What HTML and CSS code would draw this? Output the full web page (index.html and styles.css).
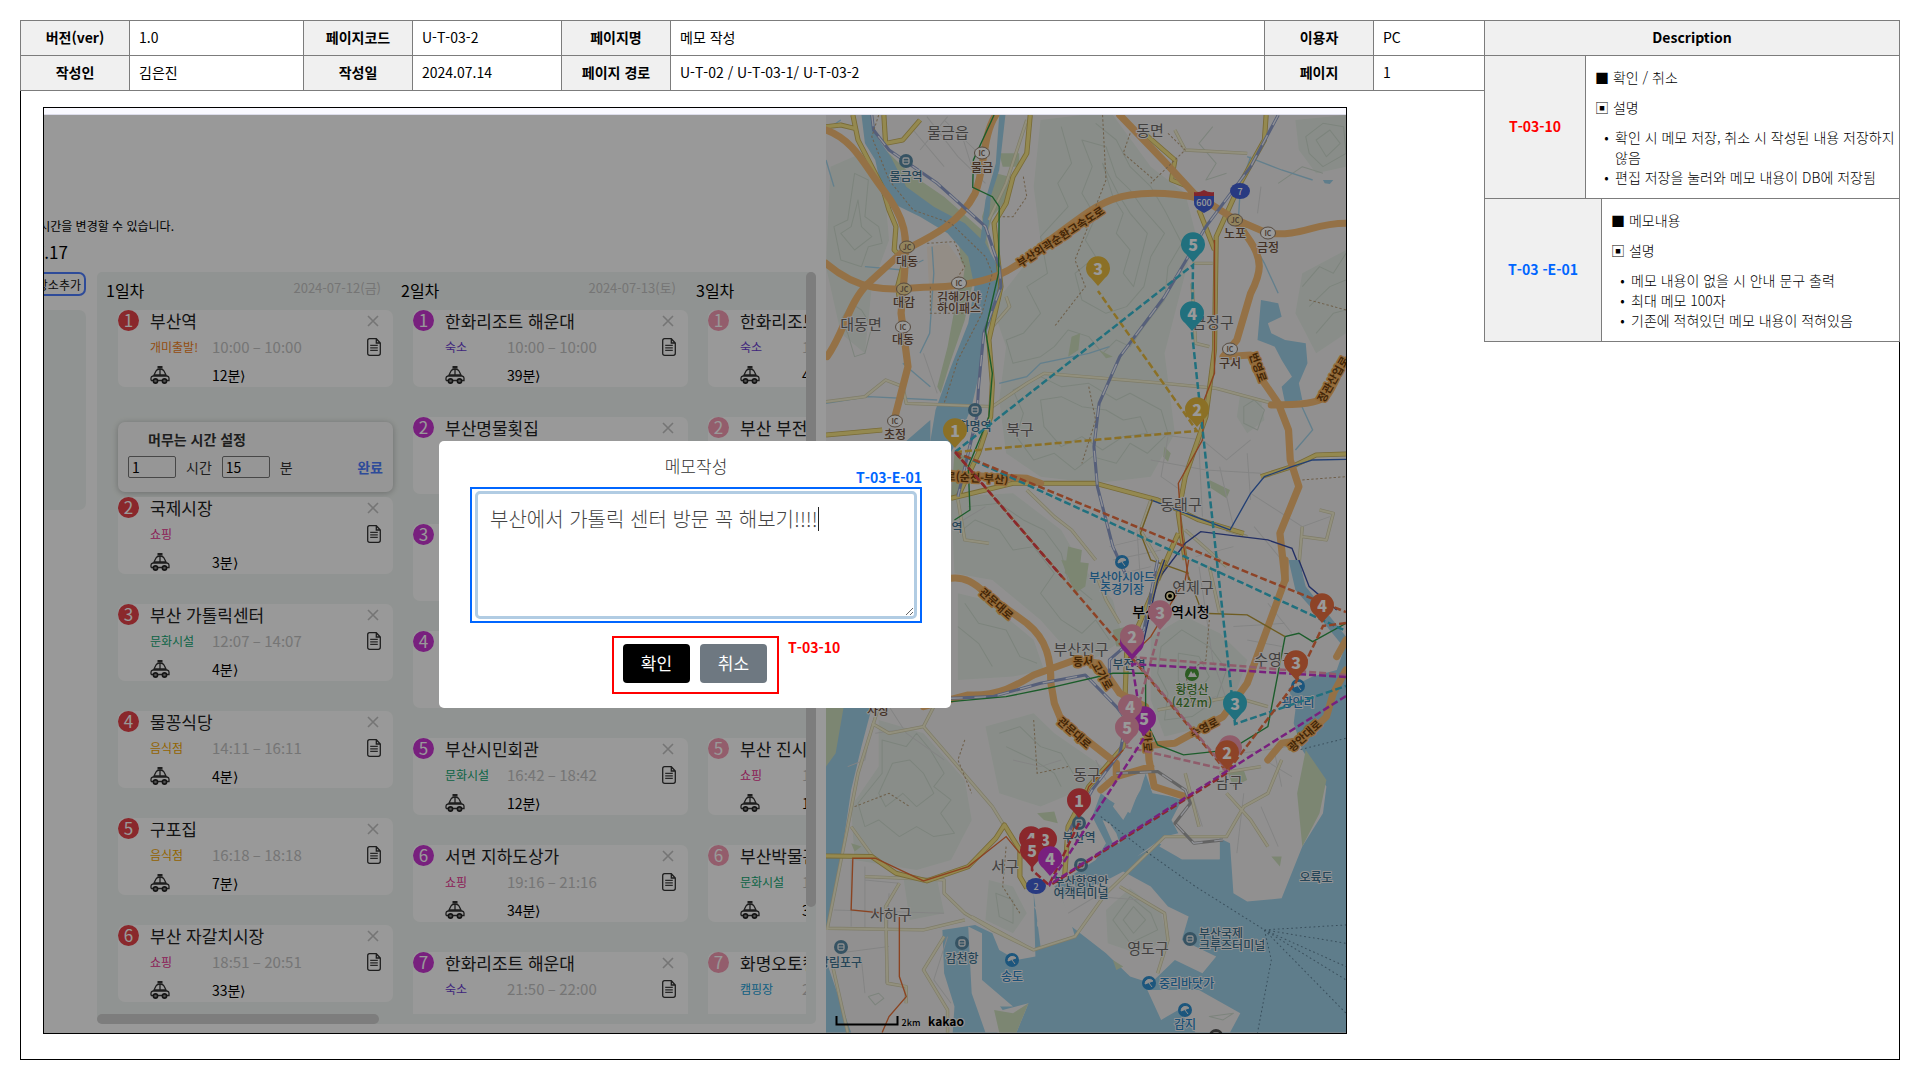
FILE: index.html
```html
<!DOCTYPE html>
<html lang="ko">
<head>
<meta charset="utf-8">
<title>U-T-03-2 메모 작성</title>
<link rel="stylesheet" href="styles.css">
</head>
<body>
<svg class="symbols" aria-hidden="true">
  <symbol id="i-close" viewBox="0 0 12 12"><path d="M1 1L11 11M11 1L1 11" fill="none" stroke="#c4c4c4" stroke-width="1.600"/></symbol>
  <symbol id="i-doc" viewBox="0 0 14 18"><path d="M2.5 .7H9.3L13.3 5V15.3Q13.3 17.3 11.3 17.3H2.7Q.7 17.3 .7 15.3V2.7Q.7 .7 2.5 .7ZM9.3 .7V5H13.3" fill="none" stroke="#333" stroke-width="1.3"/><path d="M3.2 7.3H10.8M3.2 9.8H10.8M3.2 12.3H10.8" stroke="#444" stroke-width="1.2"/></symbol>
  <symbol id="i-car" viewBox="0 0 20 18"><path d="M7.500 0H12.500V2.500H7.500Z" fill="#333"/><path d="M10 2.5V10M3.5 10L6 5Q7 3 10 3T14 5L16.500 10M1 14.500V12Q1 10.500 3 10H17Q19 10.500 19 12V14.500H16M4 14.500H1M8 14.500H12M4.500 9H15.500" fill="none" stroke="#333" stroke-width="1.300"/><circle cx="5.500" cy="15" r="2.100" fill="#888" stroke="#222" stroke-width="1.600"/><circle cx="14.500" cy="15" r="2.100" fill="#888" stroke="#222" stroke-width="1.600"/></symbol>
</svg>

<div class="sheet">
  <section class="main">
    <table class="info">
      <colgroup><col class="w-th"><col class="w-a"><col class="w-th"><col class="w-b"><col class="w-th"><col><col class="w-th"><col class="w-c"></colgroup>
      <tr><th scope="row">버전(ver)</th><td>1.0</td><th scope="row">페이지코드</th><td>U-T-03-2</td><th scope="row">페이지명</th><td>메모 작성</td><th scope="row">이용자</th><td>PC</td></tr>
      <tr><th scope="row">작성인</th><td>김은진</td><th scope="row">작성일</th><td>2024.07.14</td><th scope="row">페이지 경로</th><td>U-T-02 / U-T-03-1/ U-T-03-2</td><th scope="row">페이지</th><td>1</td></tr>
    </table>

    <div class="shot">
      <div class="topbar"></div>
      <div class="app">
        <div class="plan">
          <aside class="side">
            <p class="hint"><span>시간을 변경할 수 있습니다.</span></p>
            <p class="period"><span>7.17</span></p>
            <button class="add" type="button">장소추가</button>
            <div class="bin"></div>
          </aside>
          <div class="board">
            <div class="days" id="days"></div>
            <div class="vbar"></div>
            <div class="hbar"></div>
          </div>
        </div>
        <div class="map">
          <svg id="map" viewBox="0 0 520 918" preserveAspectRatio="xMidYMid slice">
            <rect width="520" height="918" fill="#f2f1f0"/>
            <g transform="scale(.3444 .3333) translate(-17 -45)">
              <g class="hill">
                <path d="M640 60L760 45L850 45L960 200L1060 280L1090 400L1050 560L1000 760L1030 1000L960 1130L800 1150L640 1130L540 1060L520 900L540 740L500 620L590 500L640 420L620 260Z"/>
                <path d="M30 200L120 160L190 300L200 420L150 560L130 760L60 700L17 500Z"/>
                <path d="M1220 880L1280 900L1290 960L1240 1000L1210 950Z"/>
                <path d="M1380 60L1527 45L1527 200L1440 220L1390 150ZM1400 520L1527 450L1527 700L1440 760L1380 640Z"/>
                <path d="M380 1190L560 1180L700 1290L760 1400L850 1500L880 1620L760 1700L640 1560L500 1440L390 1420Z"/>
              </g>
              <g class="contour">
                <path d="M700 80L730 190L690 250L720 320L640 410L660 520L600 560L640 640L590 700L540 720L560 790L640 770L680 740L720 690L780 710L820 760L860 720L900 740L940 680L1000 600L1010 500L1050 430L1000 330L960 260L900 200L860 120L800 70"/>
                <path d="M760 120L790 200L760 280L800 350L770 420L800 470L740 520L760 600L830 640L890 620L940 560L960 470L1000 400L940 330L900 270L860 230L830 140Z"/>
                <path d="M820 190L850 290L880 340L860 400L900 450L880 520L910 560L930 480L950 400L900 340L870 290Z"/>
                <path d="M560 870L640 830L700 860L780 850L860 900L900 880L990 930L1010 1000L950 1060L900 1030L860 1090L790 1070L740 1110L680 1060L620 1080L570 1010L590 940Z"/>
                <path d="M640 900L700 890L760 920L830 930L880 960L930 950L950 1000L880 1010L820 1050L760 1010L700 1040L650 980Z"/>
                <path d="M40 380L80 360L100 220L140 240L130 350L170 380L180 430L140 440L120 500L60 480Z"/>
                <path d="M80 700L60 660L90 610L120 630L150 680L130 760L100 770Z"/>
                <path d="M60 400L90 380L110 300L120 380L150 410L100 450Z"/>
                <path d="M1410 110L1460 70L1520 80L1527 160L1460 200L1420 160ZM1440 120L1480 90L1510 130L1470 170Z"/>
                <path d="M1400 560L1450 500L1490 520L1527 460M1420 620L1480 560L1527 540M1440 700L1490 640L1527 630"/>
                <path d="M400 1300L450 1260L520 1290L560 1350L620 1340L680 1420L640 1480L700 1560L760 1600L800 1560L840 1620"/>
                <path d="M430 1220L520 1210L590 1260L650 1290L700 1360L720 1440L790 1500"/>
                <path d="M1140 80L1100 130L1150 190L1120 240L1180 220M1330 250L1400 200L1460 220"/>
                <path d="M1230 920L1260 900L1290 930L1270 990L1230 970Z"/>
              </g>
              <g class="park">
                <path d="M190 150L260 220L360 290L480 400L500 480L400 370L280 310L235 250Z"/>
                <path d="M520 160L578 160L578 200L530 200ZM510 220L550 230L540 300L500 350L480 420L470 350Z"/>
                <path d="M400 400L440 470L445 540L420 660L380 780L350 880L340 860L370 740L395 600L410 500Z"/>
                <path d="M730 710L755 700L750 750L720 770ZM810 750L850 770L830 775ZM1000 1040L1018 1060L1010 1085L996 1070ZM1130 1140L1190 1170L1180 1195L1135 1165ZM720 1340L760 1350L750 1440L710 1420ZM390 1060L430 1070L400 1180L380 1200Z"/>
              </g>
              <path fill="#f6ebdf" d="M310 440L370 430L420 500L415 540L320 640Z"/>
              <g class="water">
                <path d="M120 45L150 45L165 110L205 170L250 260L330 320L420 370L480 430L522 510L527 560L500 650L470 730L462 820L440 920L400 1020L380 1056L320 1023L335 930L380 800L430 670L448 560L430 470L370 400L290 350L220 315L180 275L160 180L130 130Z"/>
                <path d="M520 45L538 45L520 210L495 290L490 370L475 450L465 420L480 300L510 190Z"/>
                <path d="M1280 600L1330 610L1340 650L1300 670L1310 700L1350 720L1410 730L1415 790L1390 850L1400 900L1350 910L1340 860L1370 830L1340 780L1320 740L1270 720Z"/>
                <path d="M1460 240L1490 240L1480 252L1465 250ZM320 960L250 1023L320 1023Z"/>
              </g>
              <g class="stream">
                <path d="M17 90L60 60M17 180L40 260M325 440L330 520L318 700L290 760M240 790L320 860M520 850L600 830L640 790L780 760L840 740M1240 170L1340 210L1430 240M1250 170L1220 260L1215 350L1290 490L1330 580M1390 900L1430 990L1380 1050M130 500L240 510L300 480M17 910L140 890L340 900"/>
              </g>
              <g class="street">
                <path d="M310 50L400 170L480 250M270 90L360 200M360 60L480 180M410 100L440 200M290 150L370 50M960 1000L1110 1020L1180 1080L1250 1020M960 1080L1120 1110L1280 1120M1100 1040L1110 1250M1160 1100L1200 1280M1240 1060L1250 1200M840 1340L960 1310M850 1380L990 1350M880 1420L960 1400M920 1290L930 1440M1250 1180L1400 1280L1480 1250M1260 1280L1340 1380M1090 1370L1200 1340M400 1270L480 1220M300 760L340 880M1010 1010L990 1130L1060 1180M1280 260L1270 340"/>
              </g>
              <g class="pale-case"><path id="pale-n" d="M17 905L130 890L190 840L240 860L250 910L500 920L600 850L650 820L1000 850L1150 865L1320 912M600 60L540 250L490 360M1080 490L1140 490M1080 550L1090 730L1130 740M540 590L550 620L500 680M1030 90L1060 150L1240 160M600 1170L680 1250L730 1290L800 1380M960 1200L930 1290L980 1380M1180 1290L1240 1310M1400 1280L1390 1400M1450 1230L1490 1240L1470 1320L1400 1310M400 1200L420 1320L490 1330M1060 1290L1180 1400"/></g>
              <g class="pale"><use href="#pale-n"/></g>
              <g class="yellow-case"><path id="yellow-n" d="M17 80L60 75L100 85M95 45L110 120L180 260L200 330L220 380L215 450L245 480L225 560L245 700M185 45L190 130L240 120L290 60M610 45L600 160L560 230L540 310L505 370L525 560L490 720L500 850L495 950L460 1060L400 1190M1295 45L1290 120L1220 250L1150 410L1145 750L1120 950L1060 1130L1040 1240L1060 1380M1100 330L1145 450M380 1195L560 1150L800 1150L980 1200L1100 1260L1230 1300M1527 1062L1440 1065L1370 1100L1280 1130M17 1005L180 990M1040 1300L980 1440M930 90L1030 180L1020 240L1070 260"/></g>
              <g class="yellow"><use href="#yellow-n"/></g>
              <g class="orange"><path d="M17 90C100 120 130 200 180 265C260 370 250 420 245 520L235 640L255 800L215 960M510 45C470 110 480 200 450 280C400 380 300 420 245 450L140 550C80 610 70 700 20 770M17 490C120 580 200 570 300 562C500 560 560 510 640 440C740 370 800 300 900 285C960 275 1040 280 1100 295M870 45L1000 185L1085 280L1200 355L1300 400C1400 410 1430 370 1527 370M1205 360L1240 410C1290 480 1280 520 1250 580L1210 720L1170 770L1250 765L1270 820L1330 910L1360 990L1365 1080L1390 1160L1335 1300L1350 1440M1310 915C1400 915 1440 910 1470 890C1500 850 1500 820 1527 780M380 1120C450 1130 520 1130 600 1135L640 1150"/></g>
              <g class="rail"><path id="rail-n" d="M150 45L155 90L200 150L340 250L480 380L520 500L525 560L475 700L460 860L455 950L400 1190M1330 45L1250 200L1120 380L1000 590L870 770L810 910L795 1040L805 1160L850 1340L890 1430"/></g>
              <g class="rail-dash"><use href="#rail-n"/></g>
              <path class="thin" stroke="#2f9a48" d="M505 45L445 180L443 262L500 290L520 320L518 520L480 690L500 820L490 950L430 1100L435 1230L390 1260"/>
              <path class="thin" stroke="#e87138" d="M1145 420L1145 820L1115 900L1110 1020L1040 1150L1050 1300L1070 1440"/>
              <path class="thin" stroke="#3a6ac2" d="M960 1200L1190 1290L1250 1180L1290 1130L1370 1100L1430 1080L1527 1078"/>
              <path class="thin" stroke="#3b4fa8" d="M980 1440L1060 1330L1105 1295L1300 1320L1370 1345L1395 1410L1400 1440"/>
              <path class="thin" stroke="#b89a3a" d="M965 1200L930 1300L960 1380L1070 1420"/>
              <g class="trail"><path d="M170 45L150 110L200 240L270 330L380 370L480 470L500 520L470 640L400 780L360 910M310 430L390 425L420 500L400 530M320 560L320 640L420 640M900 100L880 160L970 240L960 250L1060 150L1010 100M590 230L600 290L560 350L530 350M820 45L830 240L740 480L770 560L680 680M1420 600L1527 630M780 860L800 960L760 1090M1400 1140L1527 1130"/></g>
            </g>
            <g transform="scale(.3444 .3333) translate(-17 1335)">
              <g class="hill">
                <path d="M170 480L300 520L420 660L440 780L380 900L280 930L100 900L90 740L170 620Z"/>
                <path d="M400 100L480 120L620 240L650 330L560 350L400 360Z"/>
                <path d="M480 500L620 460L680 520L820 620L780 680L640 740L520 700Z"/>
                <path d="M960 230L1060 170L1160 220L1240 300L1200 420L1120 500L1000 530L960 420Z"/>
                <path d="M490 960L560 980L600 1060L560 1120L480 1080ZM240 940L340 960L360 1060L260 1080Z"/>
              </g>
              <g class="contour">
                <path d="M180 540L250 560L280 520L320 570L360 640L330 680L380 720L350 760L390 820L330 830L280 800L230 830L170 780L130 800L110 730L180 640Z"/>
                <path d="M210 610L260 600L300 640L330 700L280 740L240 700L190 740L170 700Z"/>
                <path d="M420 130L460 190L540 210L580 290L630 310M400 200L460 250L500 320M520 520L580 500L640 560L700 580L740 650M540 560L620 600L680 640L700 680"/>
                <path d="M990 260L1050 210L1130 260L1180 330L1150 420L1080 470L1000 480L1010 400L980 340Z"/>
                <path d="M1040 280L1100 290L1130 350L1080 420L1040 360ZM510 1000L560 1020L560 1090L520 1070ZM140 1310L170 1300L185 1315L160 1335Z"/>
              </g>
              <g class="water">
                <path d="M17 443L150 443L120 560L90 690L70 830L45 1000L17 1110ZM17 1200L50 1300L90 1418L17 1418Z"/>
                <path d="M1527 250L1500 330L1430 350L1360 385L1380 450L1375 490L1400 570L1470 680L1460 760L1400 860L1340 1015L1240 1025L1200 1000L1190 850L1160 835L1160 898L1050 898L985 860L1010 830L1080 850L1030 790L1075 720L965 700L945 640L900 760L840 720L815 700L790 770L830 850L800 900L740 940L680 980L700 1010L720 1060L740 1130L640 1160L620 1000L625 1190L570 1200L520 1170L500 1120L450 1095L355 1110L360 1240L390 1340L385 1418L515 1418L480 1280L530 1350L605 1330L570 1418L1527 1418Z"/>
                <path d="M1360 0L1390 0L1410 80L1527 230L1527 270L1440 160L1380 90Z"/>
              </g>
              <g class="land">
                <path d="M700 1010L760 1000L880 935L960 980L1010 1040L1070 1070L1050 1140L1150 1190L1110 1240L1030 1200L960 1270L900 1250L830 1180L730 1100Z"/>
                <path d="M950 1290L1100 1290L1220 1360L1190 1418L1090 1418L1040 1350L990 1380ZM430 1100L470 1120L470 1260L560 1340L510 1340L520 1418L480 1418L440 1300Z"/>
                <path d="M850 740L900 650L945 640L930 690L880 780ZM820 780L850 850L870 850L860 820L840 790ZM970 650L1080 720L1040 800L1080 850L1160 840L1160 898L1050 898L985 850L920 890L1000 830L1040 820L1020 780L1050 720L960 690ZM620 1040L665 1050L660 1060L630 1055ZM630 1085L680 1095L630 1100Z"/>
              </g>
              <g class="hill"><path d="M830 1050L900 985L990 1060L1010 1140L920 1180L835 1150Z"/></g>
              <g class="contour"><path d="M850 1080L900 1010L960 1060L980 1110L900 1150ZM880 1080L910 1040L945 1080L910 1120ZM1130 1370L1200 1360L1170 1380Z"/></g>
              <g class="park">
                <path d="M17 443L68 443L45 580L17 620ZM505 1350L560 1360L605 1330L570 1418L520 1418ZM700 0L780 10L770 80L740 100ZM1410 570L1470 660L1450 760L1400 860L1385 700ZM1180 630L1230 630L1240 660L1200 680ZM850 210L890 200L900 260L860 260ZM630 760L680 755L690 790L650 780ZM90 850L120 860L100 875ZM1310 890L1340 890L1335 920ZM850 1200L880 1220L860 1230Z"/>
              </g>
              <g class="street">
                <path d="M150 490L130 600L80 620M200 440L250 520L360 600M160 520L300 500M90 900L90 1100M130 920L130 1110M130 960L230 970M40 1050L360 1060M200 1000L190 1270M560 600L640 620L700 600M1220 580L1360 560M1290 600L1370 650M1320 580L1340 680M1060 640L1110 800M1230 700L1210 880M1280 740L1330 860M720 1060L800 1010L930 1020M800 600L840 680M560 900L700 880M370 1130L330 1260L380 1330M50 1180L200 1160M120 1200L130 1300M1100 20L1140 300L1180 420M1200 200L1350 190M1240 240L1340 260M1300 130L1370 220M1000 450L1150 410"/>
              </g>
              <g class="pale-case"><path id="pale-s" d="M170 440L110 640L80 800L20 1110M150 490L200 520L300 500L330 440M300 500L400 620L500 740L560 840M90 800L160 900M130 950L360 960L360 1000L420 1060L500 1110L620 1170L740 1130L830 1000L1000 830L1180 830L1230 740L1300 700L1340 600M20 1105L300 1110L420 1080M440 1070L600 1160M230 970L190 1040L195 1270L250 1280L250 1330M30 1190L80 1418M360 1130L300 1230L370 1350L370 1418M870 980L1000 1060L1010 1140L980 1240M1060 640L1100 800M1280 620L1160 640M1180 700L1250 780L1300 860M800 40L830 120L870 190M1130 20L1160 160M980 450L1200 410L1300 440"/></g>
              <g class="pale"><use href="#pale-s"/></g>
              <g class="yellow-case"><path id="yellow-s" d="M17 888L150 890L220 940L310 963L430 920L510 835L535 795L580 870L580 950L600 985M1000 0L960 110L890 280L880 560L780 680L720 800L710 950"/></g>
              <g class="yellow"><use href="#yellow-s"/></g>
              <g class="orange"><path d="M380 55C420 50 450 70 480 100L600 190C660 240 670 300 670 370L680 430L700 480L860 610L860 650L815 690M300 440L430 405C520 410 580 370 620 345L740 300L810 310L870 400L945 440L955 600L970 680L1060 710M970 555L1030 550L1170 470L1240 370L1350 60L1350 0M1300 600L1340 550L1400 540L1470 470L1490 400L1527 330M1500 290L1527 240M860 650L960 620"/></g>
              <g class="rail"><path id="rail-s" d="M380 415L500 410L640 370L770 345L860 440L890 480L870 580L790 690L720 820M980 0L940 210L840 300L840 360"/></g>
              <g class="rail-dash"><use href="#rail-s"/></g>
              <g class="rail gray"><path id="rail-port" d="M860 640L980 635L1060 690L1075 730L1030 790L1085 850L1170 840"/></g>
              <g class="rail-dash"><use href="#rail-port"/></g>
              <path class="thin" stroke="#2f9a48" d="M380 425L540 410L660 385L850 340L945 340L945 480L980 555L1055 585L1190 570L1300 500L1350 230L1390 220L1430 245L1527 190"/>
              <path class="thin" stroke="#3b4fa8" d="M1000 0L980 60L940 240L900 290M1390 0L1420 80L1500 150"/>
              <path class="thin" stroke="#e87138" d="M1070 0L1060 60L960 230L890 300M880 570L780 680L720 850M95 893L90 1050L230 1065L230 1250L250 1310L200 1370L180 1418M95 895L160 895L300 963L430 920L540 830L580 880"/>
              <path class="thin" stroke="#b89a3a" d="M1070 50L1110 160L1240 165L1350 230"/>
              <g class="trail"><path d="M420 540L400 600L440 700M100 740L200 700L260 740M1130 180L1120 300L1060 340L1080 430M540 860L530 980L580 1060M620 480L630 640L720 620"/></g>
              <path class="ferry" d="M815 770L940 870L1090 980L1290 1110L1527 1360M1290 1110L1527 1095M1290 1110L1527 1150M1290 1110L1527 1220M1290 1110L1527 1260M1290 1110L1310 1200L1270 1418M1370 575L1527 535"/>
            </g>
            <g id="labels"></g>
            <g class="routes">
              <path stroke="#e8bb40" d="M129 337L371 316L272 176"/>
              <path stroke="#37bbd2" d="M129 337L367 150L366 218L393 465L409 609L520 571M129 337L410 465L520 516"/>
              <path stroke="#ec7142" d="M129 337L440 465L520 497M520 508L497 511L470 567L401 657L306 543L129 337"/>
              <path stroke="#ee9ab2" d="M520 560L306 542L401 655L301 632L333 517"/>
              <path stroke="#e6434a" d="M253 708L223 770L206 755V740M129 337L236 462"/>
              <path stroke="#e6434a" d="M401 658L223 771"/>
              <path stroke="#c936d2" d="M520 562L306 549L318 623L223 770"/>
              <path stroke="#c936d2" d="M520 581L401 656L223 770"/>
            </g>
            <g id="pins"></g>
            <path d="M10.500 901V909.500H71.500V901" fill="none" stroke="#000" stroke-width="2"/>
          </svg>
        </div>
      </div>
      <div class="dim"></div>
      <form class="modal" role="dialog" aria-labelledby="memo-title">
        <label class="modal-title" id="memo-title" for="memo">메모작성</label>
        <div class="memo-mark">
          <strong class="tag-blue">T-03-E-01</strong>
          <textarea id="memo" spellcheck="false">부산에서 가톨릭 센터 방문 꼭 해보기!!!!</textarea>
          <span class="caret"></span>
        </div>
        <div class="btn-mark">
          <button class="ok" type="button">확인</button>
          <button class="cancel" type="button">취소</button>
          <strong class="tag-red">T-03-10</strong>
        </div>
      </form>
    </div>
  </section>

  <aside class="desc">
    <table><tr><th>Description</th></tr></table>
    <table>
      <tr><th scope="row" class="code code-a">T-03-10</th>
      <td><p>■ 확인 / 취소</p><p>▣ 설명</p>
        <ul><li>확인 시 메모 저장, 취소 시 작성된 내용 저장하지 않음</li><li>편집 저장을 눌러와 메모 내용이 DB에 저장됨</li></ul></td></tr>
    </table>
    <table>
      <tr><th scope="row" class="code code-b">T-03 -E-01</th>
      <td><p>■ 메모내용</p><p>▣ 설명</p>
        <ul><li>메모 내용이 없을 시 안내 문구 출력</li><li>최대 메모 100자</li><li>기존에 적혀있던 메모 내용이 적혀있음</li></ul></td></tr>
    </table>
  </aside>
</div>
<script src="app.js"></script>
</body>
</html>
```
FILE: styles.css
```css
* { box-sizing: border-box; }
body {
  margin: 0;
  background: #fff;
  color: #000;
  font: 14px/20px "Noto Sans CJK KR", sans-serif;
}
p, ul { margin: 0; padding: 0; }
button, input, textarea { font-family: inherit; margin: 0; }
.symbols { position: absolute; width: 0; height: 0; }

.sheet {
  display: grid;
  grid-template-columns: minmax(0, 1fr) 415px;
  margin: 20px;
  min-height: calc(100vh - 40px);
  border: 1px solid #000;
}

/* tables */
table { width: 100%; border-collapse: collapse; }
th, td { border: 1px solid #7c7c7c; background: #fff; }
th { background: #f0f0f0; font-weight: 700; padding: 0 0 2px; }
.info { table-layout: fixed; margin: -1px 0 0 -1px; width: calc(100% + 2px); }
.info th, .info td { height: 35px; }
.info td { padding: 0 9px 2px; text-align: left; }
.w-th { width: 109px; }
.w-a { width: 174px; }
.w-b { width: 149px; }
.w-c { width: 111px; }
.desc { margin: -1px -1px 0 0; }
.desc table + table { margin-top: -1px; }
.desc table:first-child th { height: 35px; }
.desc td { padding: 11px 2px 11px 9px; font-weight: 300; vertical-align: top; }
.desc p { margin-bottom: 10px; }
.desc ul { padding-left: 20px; list-style-type: "•\00a0\00a0"; }
.code-a { width: 101px; color: #f00; }
.code-b { width: 117px; color: #06f; }

/* captured screen */
.shot {
  position: relative;
  width: calc(100% - 159px);
  margin: 16px 0 24px 22px;
  border: 1px solid #000;
  overflow: hidden;
}
.topbar { height: 7px; background: #f9f9ff; border-bottom: 1px solid #dcdcea; }
.app { display: grid; grid-template-columns: 782fr 520fr; height: 918px; background: #fff; }
.plan { min-width: 0; display: flex; padding: 157px 10px 0 0; }
.side { width: 42px; flex: none; margin-top: -56px; clip-path: inset(0 -100px 0 0); }
.side p { display: flex; justify-content: flex-end; white-space: nowrap; }
.hint { width: 130px; font-size: 12px; }
.period { width: 24px; margin-top: 6px; font-size: 17px; }
.add {
  display: flex;
  justify-content: flex-end;
  align-items: center;
  width: 42px;
  height: 24px;
  margin-top: 10px;
  padding: 0 3px 0 0;
  border: 2px solid #4d7dff;
  border-left: 0;
  border-radius: 0 7px 7px 0;
  background: #fff;
  color: #111;
  font-size: 12px;
  white-space: nowrap;
}
.bin { height: 200px; margin-top: 14px; background: #f1f6f3; border-radius: 0 7px 7px 0; }
.board {
  flex: 1;
  min-width: 0;
  height: 752px;
  margin-left: 11px;
  display: grid;
  grid-template: 742px 10px / minmax(0, 1fr) 10px;
  background: #f1f6f3;
  border-radius: 5px;
}
.days { display: flex; overflow: hidden; }
.vbar { height: 635px; background: #d0d0d0; border-radius: 5px; }
.hbar { width: 282px; background: #d0d0d0; border-radius: 5px; }
.day { display: flex; flex-direction: column; flex: none; width: 295px; padding: 7px 0 0 9px; }
.day-head { display: flex; flex: none; justify-content: space-between; width: 275px; height: 31px; }
.day h2 { margin: 0; font-size: 16px; line-height: 22px; font-weight: 400; }
.day time { font-size: 13px; line-height: 18px; color: #c4c4c4; }
.stop {
  display: grid;
  flex: none;
  grid-template: 22px 30px 25px / 32px 62px 1fr 26px;
  align-items: center;
  width: 275px;
  height: 77px;
  margin: 0 0 30px 12px;
  background: #fff;
  border-radius: 7px;
  white-space: nowrap;
}
.num {
  align-self: start;
  width: 21px;
  height: 21px;
  border-radius: 50%;
  color: #fff;
  font-size: 17px;
  line-height: 20px;
  text-align: center;
}
.red .num { background: #e6434a; }
.purple .num { background: #c936d2; }
.pink .num { background: #f59cb4; }
.stop h3 { grid-column: 2 / 4; margin: 0; font-size: 17px; line-height: 22px; font-weight: 400; color: #222; }
.stop svg { display: block; }
.tag { grid-column: 2; font-size: 12px; }
.time { font-size: 15px; color: #c4c4c4; }
.car { grid-column: 2; }
.move { font-size: 14px; }
.t-go { color: #f58219; }
.t-stay { color: #6a3dd0; }
.t-shop { color: #e8308f; }
.t-cult { color: #12a873; }
.t-food { color: #f5a800; }
.t-camp { color: #1a9fd8; }
.stay {
  flex: none;
  width: 275px;
  height: 70px;
  margin: 5px 0 5px 12px;
  padding: 7px 10px;
  border-radius: 7px;
  background: #fbfbfb;
  box-shadow: 0 1px 6px rgba(0, 0, 0, .25);
  color: #333;
}
.stay strong { display: block; margin-left: 20px; line-height: 20px; }
.stay div { display: flex; align-items: center; gap: 10px; margin-top: 7px; }
.stay input {
  width: 48px;
  height: 22px;
  padding: 0 3px;
  border: 1px solid #777;
  border-radius: 2px;
  background: transparent;
  font-size: 14px;
}
.stay button { margin-left: auto; padding: 0; border: 0; background: none; color: #4d7dff; font-size: 14px; font-weight: 700; }

/* map */
.map { min-width: 0; overflow: hidden; }
.map svg { display: block; width: 100%; height: 100%; }
.hill { fill: #e4ece4; }
.contour { fill: none; stroke: #d0dbd0; stroke-width: 3; stroke-linejoin: round; }
.park { fill: #cfdfbf; }
.water { fill: #9fd0e8; }
.land { fill: #f2f1f0; }
.stream { fill: none; stroke: #a6d4ea; stroke-width: 4; }
.street { fill: none; stroke: #dcdcdc; stroke-width: 3; }
.pale-case { fill: none; stroke: #d3cfae; stroke-width: 10; stroke-linejoin: round; }
.pale { fill: none; stroke: #f4f0d0; stroke-width: 6; stroke-linejoin: round; }
.yellow-case { fill: none; stroke: #c9b25c; stroke-width: 15; stroke-linejoin: round; }
.yellow { fill: none; stroke: #f7e486; stroke-width: 10; stroke-linejoin: round; }
.orange { fill: none; stroke: #f7bd75; stroke-width: 21; stroke-linejoin: round; stroke-linecap: round; }
.rail { fill: none; stroke: #8f9fcb; stroke-width: 9; stroke-linejoin: round; }
.rail.gray { stroke: #a5a5a5; }
.rail-dash { fill: none; stroke: #eef0f8; stroke-width: 4; stroke-dasharray: 34 34; }
.thin { fill: none; stroke-width: 4; }
.trail { fill: none; stroke: #b99f7d; stroke-width: 3; stroke-dasharray: 7 6; }
.ferry { fill: none; stroke: #5f8499; stroke-width: 3; stroke-dasharray: 5 8; }
.routes { fill: none; stroke-width: 2.500; stroke-dasharray: 7 3; }
.map text { text-anchor: middle; dominant-baseline: central; paint-order: stroke; stroke: #f4f4f4; stroke-width: 2; stroke-linejoin: round; font-weight: 500; }
.map .gu { font-size: 15px; fill: #6f6b69; font-weight: 400; }
.map .ic { font-size: 12px; fill: #70503c; }
.map .st { font-size: 12px; fill: #3f7391; }
.map .bl { font-size: 12px; fill: #2c86c8; }
.map .gr { font-size: 12px; fill: #4a8a35; }
.map .city { font-size: 14px; fill: #000; }
.map .road { font-size: 11px; fill: #71400c; stroke: #f7b25f; stroke-width: 3; font-weight: 700; }
.map .left { text-anchor: start; }
.map .small { font-size: 9px; fill: #000; }
.map .brand { font-size: 12px; fill: #000; font-weight: 700; }
.map .badge { font-size: 7px; stroke: none; fill: #806a58; font-weight: 700; }
.map .shield { font-size: 9px; stroke: none; fill: #fff; }
.map .pin { font-size: 16px; stroke: none; fill: #fff; font-weight: 900; }

/* dimmer and dialog */
.dim { position: absolute; inset: 7px 0 0; background: rgba(0, 0, 0, .4); }
.modal {
  position: absolute;
  top: 333px;
  left: calc(50% - 256px);
  width: 512px;
  height: 267px;
  padding: 13px 29px 0 31px;
  border-radius: 5px;
  background: #fff;
}
.modal-title { display: block; line-height: 24px; font-size: 17px; font-weight: 300; text-align: center; color: #333; }
.memo-mark { position: relative; height: 136px; margin-top: 9px; padding: 2px 3px; border: 2px solid #06f; }
.memo-mark textarea {
  display: block;
  width: 100%;
  height: 128px;
  padding: 11px 12px;
  border: 3px solid #b1cce3;
  border-radius: 5px;
  outline: 0;
  color: #444;
  font-size: 20px;
  line-height: 28px;
  font-weight: 300;
  resize: vertical;
}
.caret { position: absolute; left: 346px; top: 18px; width: 1px; height: 24px; background: #222; }
.tag-blue, .tag-red { position: absolute; line-height: 20px; white-space: nowrap; }
.tag-blue { right: -2px; top: -22px; color: #06f; }
.tag-red { left: calc(100% + 11px); top: -1px; color: #f00; }
.btn-mark {
  position: relative;
  display: flex;
  gap: 10px;
  width: 167px;
  height: 58px;
  margin: 13px 0 0 142px;
  padding: 6px 9px;
  border: 2px solid #f00;
}
.btn-mark button { width: 67px; height: 39px; padding: 0 0 2px; border: 0; border-radius: 4px; color: #fff; font-size: 17px; }
.ok { background: #000; }
.cancel { background: #6e7881; }
```
FILE: app.js
```js
const kinds = { go: '개미출발!', stay: '숙소', shop: '쇼핑', cult: '문화시설', food: '음식점', camp: '캠핑장' };

const days = [
  { name: '1일차', date: '2024-07-12(금)', color: 'red', stops: [
    ['부산역', 'go', '10:00 – 10:00', '12분'],
    ['국제시장', 'shop', '', '3분'],
    ['부산 가톨릭센터', 'cult', '12:07 – 14:07', '4분'],
    ['물꽁식당', 'food', '14:11 – 16:11', '4분'],
    ['구포집', 'food', '16:18 – 18:18', '7분'],
    ['부산 자갈치시장', 'shop', '18:51 – 20:51', '33분']] },
  { name: '2일차', date: '2024-07-13(토)', color: 'purple', stops: [
    ['한화리조트 해운대', 'stay', '10:00 – 10:00', '39분'],
    ['부산명물횟집', '', '', ''],
    ['', '', '', ''],
    ['', '', '', ''],
    ['부산시민회관', 'cult', '16:42 – 18:42', '12분'],
    ['서면 지하도상가', 'shop', '19:16 – 21:16', '34분'],
    ['한화리조트 해운대', 'stay', '21:50 – 22:00', '']] },
  { name: '3일차', date: '', color: 'pink', stops: [
    ['한화리조트', 'stay', '10:00', '41분'],
    ['부산 부전', '', '', ''],
    ['', '', '', ''],
    ['', '', '', ''],
    ['부산 진시', 'shop', '15:20', '12분'],
    ['부산박물관', 'cult', '17:30', '35분'],
    ['화명오토캠', 'camp', '20:10', '']] }
];

const stayForm = `<div class="stay"><strong>머무는 시간 설정</strong><div>
  <input id="hour" value="1"><label for="hour">시간</label>
  <input id="minute" value="15"><label for="minute">분</label>
  <button type="button">완료</button></div></div>`;

const stopCard = ([title, kind, time, move], i) => `<article class="stop">
  <span class="num">${i + 1}</span><h3>${title}</h3>
  <svg width="12" height="12"><use href="#i-close"/></svg>
  <span class="tag t-${kind}">${kinds[kind] || ''}</span><span class="time">${time}</span>
  <svg width="14" height="18"><use href="#i-doc"/></svg>
  ${move ? `<svg class="car" width="20" height="18"><use href="#i-car"/></svg><span class="move">${move}⟩</span>` : ''}</article>`;

document.getElementById('days').innerHTML = days.map((d, n) => `<section class="day ${d.color}">
  <div class="day-head"><h2>${d.name}</h2><time>${d.date}</time></div>
  ${d.stops.map((s, i) => stopCard(s, i) + (n === 0 && i === 0 ? stayForm : '')).join('')}</section>`).join('');

/* map labels: class, x, y, text, rotation */
const labels = [
  ['gu', 122, 16, '물금읍'], ['gu', 324, 14, '동면'], ['gu', 35, 208, '대동면'], ['gu', 194, 313, '북구'],
  ['gu', 387, 206, '금정구'], ['gu', 355, 388, '동래구'], ['gu', 367, 471, '연제구'], ['gu', 255, 533, '부산진구'],
  ['gu', 449, 543, '수영구'], ['gu', 261, 658, '동구'], ['gu', 403, 666, '남구'], ['gu', 179, 750, '서구'],
  ['gu', 65, 798, '사하구'], ['gu', 322, 832, '영도구'],
  ['ic', 156, 51, '물금'], ['ic', 81, 145, '대동'], ['ic', 78, 186, '대감'], ['ic', 133, 181, '김해가야'],
  ['ic', 133, 192, '하이패스'], ['ic', 77, 223, '대동'], ['ic', 69, 318, '초정'], ['ic', 409, 117, '노포'],
  ['ic', 442, 131, '금정'], ['ic', 404, 247, '구서'], ['ic', 52, 594, '사상'],
  ['st', 80, 60, '물금역'], ['st', 149, 310, '화명역'], ['st', 131, 411, '역'], ['st', 303, 548, '부전역'],
  ['st', 253, 721, '부산역'], ['st', 255, 765, '부산항연안'], ['st', 255, 777, '여객터미널'],
  ['st', 136, 842, '감천항'], ['st', 14, 846, '장림포구'], ['st', 490, 761, '오륙도'],
  ['st left', 373, 817, '부산국제'], ['st left', 373, 829, '크루즈터미널'],
  ['bl', 296, 461, '부산아시아드'], ['bl', 296, 473, '주경기장'], ['bl', 472, 586, '광안리'],
  ['bl', 186, 860, '송도'], ['bl left', 333, 867, '중리바닷가'], ['bl', 359, 908, '감지'],
  ['gr', 366, 573, '황령산'], ['gr', 366, 586, '(427m)'], ['city', 345, 496, '부산광역시청'],
  ['road', 234, 121, '부산외곽순환고속도로', -33], ['road', 433, 252, '번영로', 70], ['road', 506, 264, '정관산업로', -60],
  ['road', 151, 362, '로(순천-부산)', 3], ['road', 171, 488, '관문대로', 42], ['road', 249, 617, '관문대로', 42],
  ['road', 257, 546, '동서'], ['road', 277, 560, '고가로', 60], ['road', 378, 612, '수영로', -28],
  ['road', 478, 620, '광안대로', -42], ['road', 322, 627, '가로', 85],
  ['small', 85, 907, '2km'], ['brand', 120, 905, 'kakao']
];
const badges = [
  ['IC', 156, 38], ['JC', 81, 132], ['JC', 78, 174], ['IC', 133, 168], ['IC', 77, 212], ['IC', 69, 306],
  ['JC', 409, 105], ['IC', 442, 118], ['IC', 404, 234]
];
const spots = [
  ['#5b8ba6', 80, 46], ['#5b8ba6', 149, 295], ['#2f8fd0', 296, 447], ['#4a9a3a', 366, 559], ['#2f8fd0', 472, 571],
  ['#5b8ba6', 253, 708], ['#5b8ba6', 255, 750], ['#5b8ba6', 364, 824], ['#2f8fd0', 323, 868], ['#2f8fd0', 359, 895],
  ['#2f8fd0', 186, 845], ['#5b8ba6', 136, 828], ['#5b8ba6', 15, 832], ['#555', 390, 921]
];
const text = ([cls, x, y, s, r]) => `<text class="${cls}" x="${x}" y="${y}"${r ? ` transform="rotate(${r} ${x} ${y})"` : ''}>${s}</text>`;
const glyph = (c, x, y) => c === '#2f8fd0'
  ? `<path d="M${x - 4} ${y + 1}A4.500 4.500 0 0 1 ${x + 4} ${y - 2}ZM${x} ${y}L${x + 3} ${y + 4}" fill="#eee" stroke="#eee"/>`
  : c === '#4a9a3a' ? `<path d="M${x - 4} ${y + 3}L${x - 1} ${y - 3}L${x + 1} ${y}L${x + 2} ${y - 2}L${x + 5} ${y + 3}Z" fill="#eee"/>`
  : `<rect x="${x - 3}" y="${y - 3}" width="6" height="6" rx="1.500" fill="none" stroke="#eee" stroke-width="1.300"/><path d="M${x - 3} ${y}H${x + 3}" stroke="#eee"/>`;

document.getElementById('labels').innerHTML =
  spots.map(([c, x, y]) => `<circle cx="${x}" cy="${y}" r="7" fill="${c}"/>${glyph(c, x, y)}`).join('') +
  badges.map(([s, x, y]) => `<ellipse cx="${x}" cy="${y}" rx="7.500" ry="6" fill="${s === 'JC' ? '#f5dc9c' : '#fff'}" stroke="#8d7a68"/>` + text(['badge', x, y, s])).join('') +
  labels.map(text).join('') +
  `<circle cx="344" cy="481" r="4.500" fill="#ffefb0" stroke="#000" stroke-width="1.500"/><circle cx="344" cy="481" r="2"/>
   <path d="M368 78Q373 79 378 76Q383 79 388 78V87Q389 93 378 98Q367 93 368 87Z" fill="#4361d8"/><path d="M368 81V77Q373 78 378 75Q383 78 388 77V81Z" fill="#d8404a"/>
   <ellipse cx="414" cy="76" rx="10" ry="8" fill="#4361d8"/><ellipse cx="210" cy="771" rx="10" ry="8" fill="#4361d8"/>` +
  text(['shield', 378, 87, '600']) + text(['shield', 414, 76, '7']) + text(['shield', 210, 771, '2']);

const C = { gold: '#e8bb40', cyan: '#37bbd2', orange: '#ec7142', pink: '#f09ab2', purple: '#c936d2', red: '#e6434a' };
const pins = [
  ['cyan', 367, 129, 5], ['cyan', 366, 198, 4], ['gold', 272, 153, 3], ['gold', 371, 294, 2], ['gold', 129, 315, 1],
  ['orange', 496, 490, 4], ['orange', 470, 547, 3], ['pink', 404, 632, ''], ['orange', 401, 637, 2], ['cyan', 409, 588, 3],
  ['pink', 334, 497, 3], ['purple', 306, 527, ''], ['pink', 306, 521, 2], ['purple', 318, 603, 5], ['pink', 304, 591, 4],
  ['pink', 301, 612, 5], ['red', 253, 685, 1], ['red', 219, 724, 3], ['red', 205, 723, 4], ['red', 206, 735, 5], ['purple', 224, 743, 4]
];
document.getElementById('pins').innerHTML = pins.map(([c, x, y, n]) =>
  `<path d="M${x} ${y + 18}L${x - 7} ${y + 10}A12 12 0 1 1 ${x + 7} ${y + 10}Z" fill="${C[c]}"/>` + text(['pin', x, y, n])).join('');
```
